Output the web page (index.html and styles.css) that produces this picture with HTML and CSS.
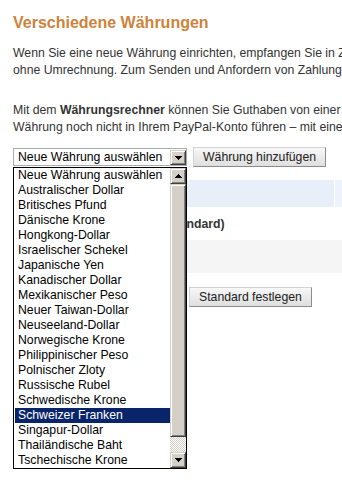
FILE: index.html
```html
<!DOCTYPE html>
<html lang="de">
<head>
    <meta charset="UTF-8">
    <meta name="viewport" content="width=device-width, initial-scale=1.0">
    <title>Verschiedene Währungen</title>
    <link rel="stylesheet" href="styles.css">
</head>
<body>
    <div class="page">
        <h1 class="title">Verschiedene Währungen</h1>

        <p class="intro">Wenn Sie eine neue Währung einrichten, empfangen Sie in Zukunft Zahlungen in dieser Währung<br>ohne Umrechnung. Zum Senden und Anfordern von Zahlungen in dieser Währung benötigen Sie</p>
        <p class="intro">Mit dem <strong>Währungsrechner</strong> können Sie Guthaben von einer Währung in eine andere umrechnen. Wenn Sie eine<br>Währung noch nicht in Ihrem PayPal-Konto führen – mit einem Klick richten Sie sie ein.</p>

        <div class="picker">
            <div class="select">
                <span class="select-text">Neue Währung auswählen</span>
                <span class="select-arrow">
                    <svg width="7" height="4" viewBox="0 0 7 4"><path d="M0 0h7v1H0zM1 1h5v1H1zM2 2h3v1H2zM3 3h1v1H3z" fill="#000"/></svg>
                </span>

                <!-- open dropdown list -->
                <div class="dropdown">
                    <ul class="options">
                        <li>Neue Währung auswählen</li>
                        <li>Australischer Dollar</li>
                        <li>Britisches Pfund</li>
                        <li>Dänische Krone</li>
                        <li>Hongkong-Dollar</li>
                        <li>Israelischer Schekel</li>
                        <li>Japanische Yen</li>
                        <li>Kanadischer Dollar</li>
                        <li>Mexikanischer Peso</li>
                        <li>Neuer Taiwan-Dollar</li>
                        <li>Neuseeland-Dollar</li>
                        <li>Norwegische Krone</li>
                        <li>Philippinischer Peso</li>
                        <li>Polnischer Zloty</li>
                        <li>Russische Rubel</li>
                        <li>Schwedische Krone</li>
                        <li class="selected">Schweizer Franken</li>
                        <li>Singapur-Dollar</li>
                        <li>Thailändische Baht</li>
                        <li>Tschechische Krone</li>
                    </ul>
                    <div class="scrollbar">
                        <span class="sb-btn">
                            <svg width="7" height="4" viewBox="0 0 7 4"><path d="M3 0h1v1H3zM2 1h3v1H2zM1 2h5v1H1zM0 3h7v1H0z" fill="#000"/></svg>
                        </span>
                        <span class="sb-thumb"></span>
                        <span class="sb-track"></span>
                        <span class="sb-btn">
                            <svg width="7" height="4" viewBox="0 0 7 4"><path d="M0 0h7v1H0zM1 1h5v1H1zM2 2h3v1H2zM3 3h1v1H3z" fill="#000"/></svg>
                        </span>
                    </div>
                </div>
            </div>
            <button class="btn">Währung hinzufügen</button>
        </div>

        <div class="currency-table">
            <div class="row row-head">
                <div class="cell cell-main">Währung</div>
                <div class="cell cell-side"></div>
            </div>
            <div class="row row-default">
                <div class="cell cell-radio"><input type="radio" name="cur" checked></div>
                <div class="cell cell-name">Euro (Standard)</div>
            </div>
            <div class="row row-alt"></div>
            <div class="actions">
                <button class="btn">Standard festlegen</button>
            </div>
        </div>
    </div>
</body>
</html>
```

FILE: styles.css
```css
* {
    margin: 0;
    padding: 0;
    box-sizing: border-box;
}

body {
    background: #fff;
    color: #333;
    font-family: 'Liberation Sans', Arial, sans-serif;
    font-size: 12.25px;
}

.page {
    width: 342px;
    min-height: 480px;
    overflow: hidden;
    padding: 13px 0 0 13px;
}

/* Heading and text */
.title {
    font-size: 16px;
    line-height: 19px;
    font-weight: bold;
    color: #cd833c;
    margin-bottom: 13px;
}

.intro {
    line-height: 17px;
    white-space: nowrap;
    margin-bottom: 23px;
}

.intro strong {
    color: #333;
}

/* Currency picker */
.picker {
    display: flex;
    align-items: center;
    gap: 6px;
    margin-top: -12px;
}

.select {
    position: relative;
    flex: none;
    width: 174px;
    height: 18px;
    border: 1px solid #a5acb2;
    background: #fff;
    display: flex;
    align-items: stretch;
}

.select-text {
    flex: 1;
    padding-left: 4px;
    line-height: 16px;
    color: #000;
    white-space: nowrap;
}

.select-arrow,
.sb-btn {
    width: 16px;
    display: flex;
    align-items: center;
    justify-content: center;
    background: #d4d0c8;
    border: 1px solid;
    border-color: #d4d0c8 #404040 #404040 #d4d0c8;
    box-shadow: inset 1px 1px #fff, inset -1px -1px #808080;
}

.select-arrow {
    margin-top: 1px;
}

.dropdown {
    position: absolute;
    left: -1px;
    top: calc(100% + 2px);
    width: 174px;
    height: 302px;
    border: 1px solid #000;
    background: #fff;
    display: flex;
    z-index: 10;
}

.options {
    flex: 1;
    list-style: none;
    padding-left: 1px;
}

.options li {
    height: 15px;
    line-height: 15px;
    padding-left: 3px;
    color: #000;
    white-space: nowrap;
}

.options li.selected {
    background: #0a246a;
    color: #fff;
}

.scrollbar {
    width: 16px;
    display: flex;
    flex-direction: column;
}

.sb-btn {
    height: 16px;
}

.sb-thumb {
    flex: 1;
    background: #d4d0c8;
    border: 1px solid;
    border-color: #d4d0c8 #404040 #404040 #d4d0c8;
    box-shadow: inset 1px 1px #fff, inset -1px -1px #808080;
}

.sb-track {
    height: 15px;
    background: repeating-conic-gradient(#d4d0c8 0 25%, #fff 0 50%) 0 0 / 2px 2px;
}

/* Buttons */
.btn {
    flex: none;
    font: inherit;
    height: 20px;
    padding: 0 9px;
    color: #222;
    white-space: nowrap;
    border: 1px solid;
    border-color: #d2d2d2 #8c8c8c #8c8c8c #d2d2d2;
    background: linear-gradient(#f8f8f8, #dedede);
}

/* Currency table */
.currency-table {
    margin-top: 13px;
}

.row {
    display: flex;
    align-items: center;
}

.row-head {
    height: 27px;
    align-items: stretch;
}

.row-head .cell-main {
    width: 321px;
    flex: none;
    background: #e9eff9;
    font-weight: bold;
    padding: 7px 0 0 6px;
}

.row-head .cell-side {
    flex: 1;
    background: #eef2fa;
    border-left: 1px solid #fff;
}

.row-default {
    height: 33px;
}

.cell-radio {
    width: 119px;
    flex: none;
    padding-left: 6px;
}

.cell-name {
    font-weight: bold;
    color: #333;
    white-space: nowrap;
}

.row-alt {
    height: 33px;
    background: #f5f5f5;
}

.actions {
    margin-top: 14px;
    padding-left: 176px;
}
```
